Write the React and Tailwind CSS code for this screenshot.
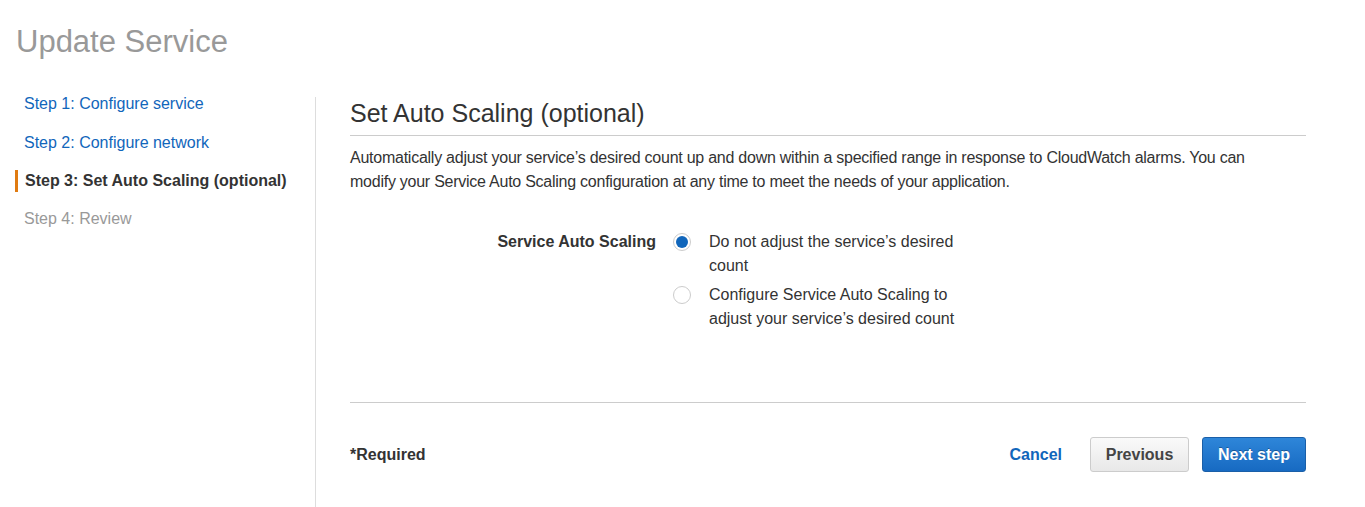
export default function App() {
  const font = { fontFamily: '"Liberation Sans", Arial, sans-serif' };
  return (
    <div style={font} className="w-[1365px] h-[507px] bg-white text-[#333] overflow-hidden">
      <h1 className="pl-[16px] pt-[24px] text-[31px] leading-[36px] text-[#999]">Update Service</h1>
      <div className="flex mt-[24px]">
        <nav className="w-[315px] pl-[15px] pt-[1px] flex flex-col text-[16px] shrink-0">
          <div className="h-[38px] flex items-center pl-[9px] text-[#1166bb]">Step 1: Configure service</div>
          <div className="h-[39px] flex items-center pl-[9px] text-[#1166bb]">Step 2: Configure network</div>
          <div className="h-[38px] flex items-center">
            <div className="w-[3px] h-[22px] bg-[#e07b12]"></div>
            <span className="pl-[7px] font-bold text-[#333]">Step 3: Set Auto Scaling (optional)</span>
          </div>
          <div className="h-[38px] flex items-center pl-[9px] text-[#999]">Step 4: Review</div>
        </nav>
        <div className="w-[1px] bg-[#ddd] h-[420px] mt-[13px] shrink-0"></div>
        <main className="ml-[34px] w-[956px] pt-[13px]">
          <h2 className="text-[25px] leading-[30px] text-[#333] pt-[1px]">Set Auto Scaling (optional)</h2>
          <div className="mt-[7px] h-[1px] bg-[#ccc]"></div>
          <p className="mt-[10px] max-w-[920px] text-[16px] leading-[24px] tracking-[-0.25px]">
            Automatically adjust your service’s desired count up and down within a specified range in response to CloudWatch alarms. You can modify your Service Auto Scaling configuration at any time to meet the needs of your application.
          </p>
          <div className="mt-[36px] flex text-[16px] leading-[24px]">
            <div className="w-[306px] text-right font-bold">Service Auto Scaling</div>
            <div className="ml-[17px] flex flex-col gap-[5px]">
              <label className="flex">
                <span className="w-[36px] h-[24px] flex items-center shrink-0">
                  <span className="w-[18px] h-[18px] rounded-full border border-[#ccc] flex items-center justify-center">
                    <span className="w-[12px] h-[12px] rounded-full bg-[#1166bb]"></span>
                  </span>
                </span>
                <span className="w-[250px]">Do not adjust the service’s desired count</span>
              </label>
              <label className="flex">
                <span className="w-[36px] h-[24px] flex items-center shrink-0">
                  <span className="w-[18px] h-[18px] rounded-full border border-[#ccc] bg-white"></span>
                </span>
                <span className="w-[250px]">Configure Service Auto Scaling to adjust your service’s desired count</span>
              </label>
            </div>
          </div>
          <div className="mt-[71px] h-[1px] bg-[#ccc]"></div>
          <div className="mt-[34px] flex items-center text-[16px]">
            <div className="font-bold flex-1">*Required</div>
            <button className="font-bold text-[#1166bb] mr-[28px]">Cancel</button>
            <button className="h-[35px] w-[99px] rounded-[3px] border border-[#ccc] bg-gradient-to-b from-[#fafafa] to-[#e8e8e8] font-bold text-[#444] mr-[13px]">Previous</button>
            <button className="h-[35px] w-[104px] rounded-[3px] border border-[#1a5fa8] bg-gradient-to-b from-[#2e86d9] to-[#176ac2] font-bold text-white [text-shadow:0_-1px_0_rgba(0,0,0,0.3)]">Next step</button>
          </div>
        </main>
      </div>
    </div>
  );
}
